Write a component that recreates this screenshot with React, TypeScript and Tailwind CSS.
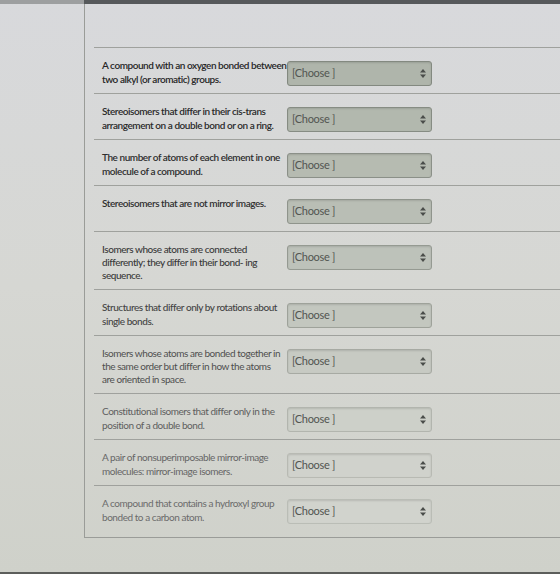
import React from "react";

interface MatchRow {
  lines: string[];
  tone: string;
  box: string;
}

const rows: MatchRow[] = [
  {
    lines: ["A compound with an oxygen bonded between", "two alkyl (or aromatic) groups."],
    tone: "text-[#262626] font-semibold",
    box: "bg-[#afb5ab] border-[#838980]",
  },
  {
    lines: ["Stereoisomers that differ in their cis-trans", "arrangement on a double bond or on a ring."],
    tone: "text-[#2a2a2a] font-semibold",
    box: "bg-[#b2b8ae] border-[#868c83]",
  },
  {
    lines: ["The number of atoms of each element in one", "molecule of a compound."],
    tone: "text-[#2e2e2e] font-semibold",
    box: "bg-[#b6bbb1] border-[#8b9088]",
  },
  {
    lines: ["Stereoisomers that are not mirror images."],
    tone: "text-[#303030] font-semibold",
    box: "bg-[#b9beb5] border-[#8f948c]",
  },
  {
    lines: ["Isomers whose atoms are connected", "differently; they differ in their bond- ing", "sequence."],
    tone: "text-[#393939] font-medium",
    box: "bg-[#bdc2ba] border-[#959a92]",
  },
  {
    lines: ["Structures that differ only by rotations about", "single bonds."],
    tone: "text-[#444] font-medium",
    box: "bg-[#c3c7bf] border-[#9ea29a]",
  },
  {
    lines: ["Isomers whose atoms are bonded together in", "the same order but differ in how the atoms", "are oriented in space."],
    tone: "text-[#4f4f4f]",
    box: "bg-[#c7cac3] border-[#a7aaa3]",
  },
  {
    lines: ["Constitutional isomers that differ only in the", "position of a double bond."],
    tone: "text-[#5e5e5e]",
    box: "bg-[#cdd0c9] border-[#b2b5ae]",
  },
  {
    lines: ["A pair of nonsuperimposable mirror-image", "molecules: mirror-image isomers."],
    tone: "text-[#666]",
    box: "bg-[#d0d2cc] border-[#b8bab3]",
  },
  {
    lines: ["A compound that contains a hydroxyl group", "bonded to a carbon atom."],
    tone: "text-[#6b6b6b]",
    box: "bg-[#d1d3cd] border-[#babdb6]",
  },
];

function SortArrows() {
  return (
    <svg width="6" height="9" viewBox="0 0 6 9" className="fill-[#4a4d4a]">
      <path d="M3 0 L6 3.5 H0 Z" />
      <path d="M3 9 L6 5.5 H0 Z" />
    </svg>
  );
}

function ChooseBox({ box }: { box: string }) {
  return (
    <div
      className={`mt-[2px] flex h-[25px] w-[145px] shrink-0 items-center justify-between rounded-[3px] border pl-[4px] pr-[5px] pb-[1px] shadow-[inset_0_1px_2px_rgba(0,0,0,0.12)] ${box}`}
    >
      <span className="text-[11px] tracking-[-0.3px] text-[#525551]">[Choose ]</span>
      <SortArrows />
    </div>
  );
}

function Row({ row }: { row: MatchRow }) {
  const tall = row.lines.length > 2;
  return (
    <div className="flex items-start border-t border-[#9fa19d] pl-[8px] pt-[11px] pb-[7px]">
      <div
        className={`w-[185px] shrink-0 text-[10px] tracking-[-0.45px] ${tall ? "leading-[13px]" : "leading-[13.5px]"} ${row.tone}`}
      >
        {row.lines.map((l) => (
          <div key={l} className="whitespace-nowrap">
            {l}
          </div>
        ))}
      </div>
      <ChooseBox box={row.box} />
    </div>
  );
}

export default function App() {
  return (
    <div className="relative flex h-[574px] w-[560px] flex-col overflow-hidden bg-linear-to-b from-[#d8d9dc] via-[#d6d7d3] to-[#cfd1ca] font-['Lato','Liberation_Sans',sans-serif]">
      <div className="flex h-[4px] shrink-0">
        <div className="w-[84px] bg-[#9d9fa0]" />
        <div className="flex-1 bg-[#56595b]" />
      </div>
      <div className="flex flex-1">
        <div className="w-[84px] shrink-0" />
        <div className="flex h-[534px] flex-1 flex-col border-b border-l border-[#9a9c98] pt-[43px] pl-[9px]">
          {rows.map((r) => (
            <Row key={r.lines[0]} row={r} />
          ))}
        </div>
      </div>
      <div className="h-[2px] shrink-0 bg-[#5c5e5b]" />
    </div>
  );
}
